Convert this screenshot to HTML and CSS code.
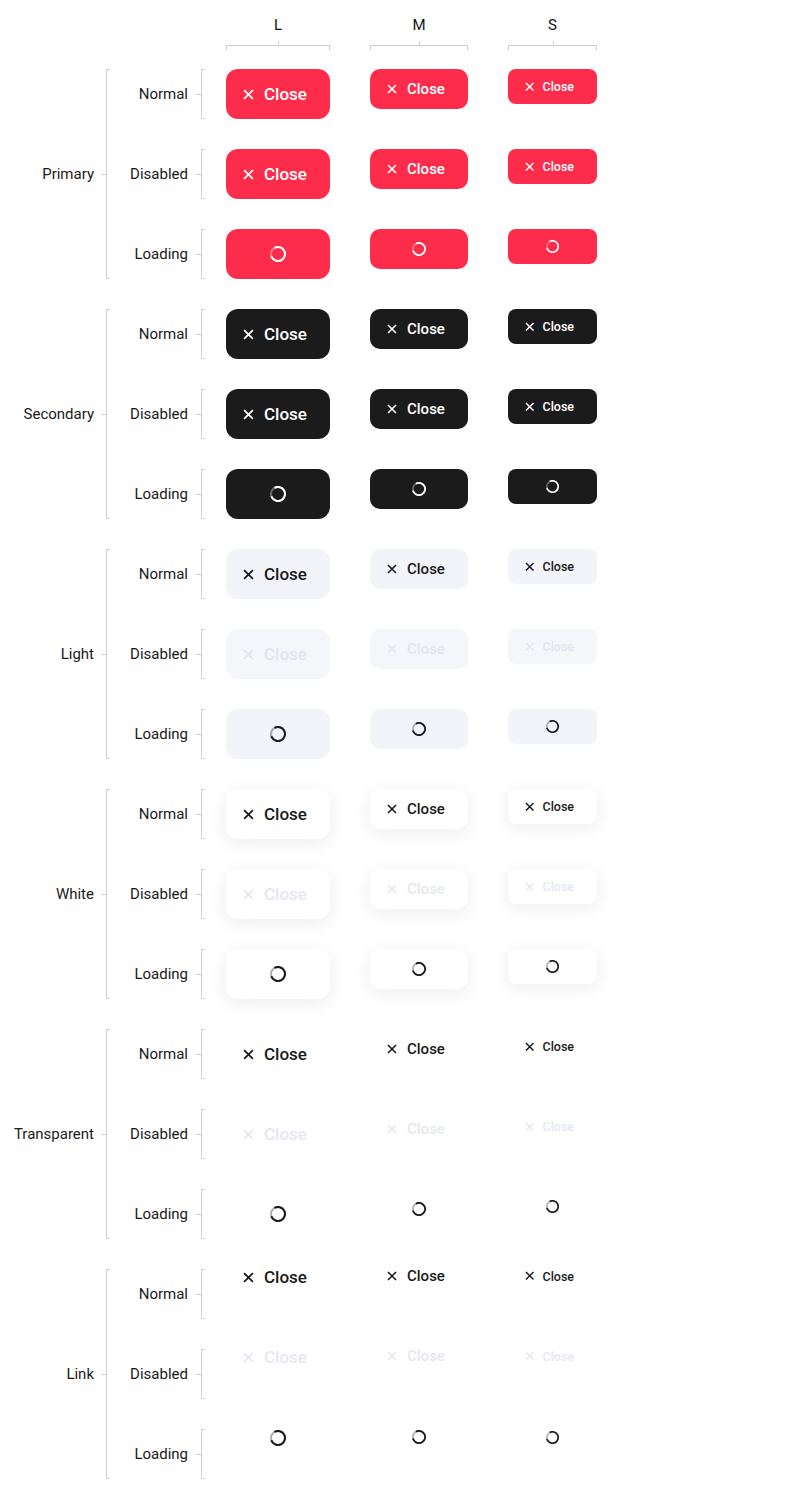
FILE: index.html
```html
<!DOCTYPE html>
<html lang="en">
<head>
<meta charset="utf-8">
<title>Close buttons</title>
<link rel="stylesheet" href="styles.css">
</head>
<body>
<div class="page">
  <div class="head">
    <div class="col-head"><span class="col-title">L</span><div class="hb"></div></div>
    <div class="col-head"><span class="col-title">M</span><div class="hb"></div></div>
    <div class="col-head"><span class="col-title">S</span><div class="hb"></div></div>
  </div>

  <!-- Primary -->
  <div class="group primary">
    <div class="g-label">Primary</div><div class="tick"></div><div class="bracket"></div>
    <div class="rows">
      <div class="row">
        <div class="r-label">Normal</div><div class="tick"></div><div class="bracket r"></div>
        <div class="cells">
          <button class="btn l"><svg class="x" viewBox="0 0 10 10"><path d="M1 1L9 9M9 1L1 9"/></svg><span>Close</span></button>
          <button class="btn m"><svg class="x" viewBox="0 0 10 10"><path d="M1 1L9 9M9 1L1 9"/></svg><span>Close</span></button>
          <button class="btn s"><svg class="x" viewBox="0 0 10 10"><path d="M1 1L9 9M9 1L1 9"/></svg><span>Close</span></button>
        </div>
      </div>
      <div class="row disabled">
        <div class="r-label">Disabled</div><div class="tick"></div><div class="bracket r"></div>
        <div class="cells">
          <button class="btn l"><svg class="x" viewBox="0 0 10 10"><path d="M1 1L9 9M9 1L1 9"/></svg><span>Close</span></button>
          <button class="btn m"><svg class="x" viewBox="0 0 10 10"><path d="M1 1L9 9M9 1L1 9"/></svg><span>Close</span></button>
          <button class="btn s"><svg class="x" viewBox="0 0 10 10"><path d="M1 1L9 9M9 1L1 9"/></svg><span>Close</span></button>
        </div>
      </div>
      <div class="row">
        <div class="r-label">Loading</div><div class="tick"></div><div class="bracket r"></div>
        <div class="cells">
          <button class="btn l loading"><svg class="spin" viewBox="0 0 16 16"><circle class="track" cx="8" cy="8" r="7"/><circle class="arc" cx="8" cy="8" r="7"/></svg></button>
          <button class="btn m loading"><svg class="spin" viewBox="0 0 16 16"><circle class="track" cx="8" cy="8" r="7"/><circle class="arc" cx="8" cy="8" r="7"/></svg></button>
          <button class="btn s loading"><svg class="spin" viewBox="0 0 16 16"><circle class="track" cx="8" cy="8" r="7"/><circle class="arc" cx="8" cy="8" r="7"/></svg></button>
        </div>
      </div>
    </div>
  </div>

  <!-- Secondary -->
  <div class="group secondary">
    <div class="g-label">Secondary</div><div class="tick"></div><div class="bracket"></div>
    <div class="rows">
      <div class="row">
        <div class="r-label">Normal</div><div class="tick"></div><div class="bracket r"></div>
        <div class="cells">
          <button class="btn l"><svg class="x" viewBox="0 0 10 10"><path d="M1 1L9 9M9 1L1 9"/></svg><span>Close</span></button>
          <button class="btn m"><svg class="x" viewBox="0 0 10 10"><path d="M1 1L9 9M9 1L1 9"/></svg><span>Close</span></button>
          <button class="btn s"><svg class="x" viewBox="0 0 10 10"><path d="M1 1L9 9M9 1L1 9"/></svg><span>Close</span></button>
        </div>
      </div>
      <div class="row disabled">
        <div class="r-label">Disabled</div><div class="tick"></div><div class="bracket r"></div>
        <div class="cells">
          <button class="btn l"><svg class="x" viewBox="0 0 10 10"><path d="M1 1L9 9M9 1L1 9"/></svg><span>Close</span></button>
          <button class="btn m"><svg class="x" viewBox="0 0 10 10"><path d="M1 1L9 9M9 1L1 9"/></svg><span>Close</span></button>
          <button class="btn s"><svg class="x" viewBox="0 0 10 10"><path d="M1 1L9 9M9 1L1 9"/></svg><span>Close</span></button>
        </div>
      </div>
      <div class="row">
        <div class="r-label">Loading</div><div class="tick"></div><div class="bracket r"></div>
        <div class="cells">
          <button class="btn l loading"><svg class="spin" viewBox="0 0 16 16"><circle class="track" cx="8" cy="8" r="7"/><circle class="arc" cx="8" cy="8" r="7"/></svg></button>
          <button class="btn m loading"><svg class="spin" viewBox="0 0 16 16"><circle class="track" cx="8" cy="8" r="7"/><circle class="arc" cx="8" cy="8" r="7"/></svg></button>
          <button class="btn s loading"><svg class="spin" viewBox="0 0 16 16"><circle class="track" cx="8" cy="8" r="7"/><circle class="arc" cx="8" cy="8" r="7"/></svg></button>
        </div>
      </div>
    </div>
  </div>

  <!-- Light -->
  <div class="group light">
    <div class="g-label">Light</div><div class="tick"></div><div class="bracket"></div>
    <div class="rows">
      <div class="row">
        <div class="r-label">Normal</div><div class="tick"></div><div class="bracket r"></div>
        <div class="cells">
          <button class="btn l"><svg class="x" viewBox="0 0 10 10"><path d="M1 1L9 9M9 1L1 9"/></svg><span>Close</span></button>
          <button class="btn m"><svg class="x" viewBox="0 0 10 10"><path d="M1 1L9 9M9 1L1 9"/></svg><span>Close</span></button>
          <button class="btn s"><svg class="x" viewBox="0 0 10 10"><path d="M1 1L9 9M9 1L1 9"/></svg><span>Close</span></button>
        </div>
      </div>
      <div class="row disabled">
        <div class="r-label">Disabled</div><div class="tick"></div><div class="bracket r"></div>
        <div class="cells">
          <button class="btn l"><svg class="x" viewBox="0 0 10 10"><path d="M1 1L9 9M9 1L1 9"/></svg><span>Close</span></button>
          <button class="btn m"><svg class="x" viewBox="0 0 10 10"><path d="M1 1L9 9M9 1L1 9"/></svg><span>Close</span></button>
          <button class="btn s"><svg class="x" viewBox="0 0 10 10"><path d="M1 1L9 9M9 1L1 9"/></svg><span>Close</span></button>
        </div>
      </div>
      <div class="row">
        <div class="r-label">Loading</div><div class="tick"></div><div class="bracket r"></div>
        <div class="cells">
          <button class="btn l loading"><svg class="spin" viewBox="0 0 16 16"><circle class="track" cx="8" cy="8" r="7"/><circle class="arc" cx="8" cy="8" r="7"/></svg></button>
          <button class="btn m loading"><svg class="spin" viewBox="0 0 16 16"><circle class="track" cx="8" cy="8" r="7"/><circle class="arc" cx="8" cy="8" r="7"/></svg></button>
          <button class="btn s loading"><svg class="spin" viewBox="0 0 16 16"><circle class="track" cx="8" cy="8" r="7"/><circle class="arc" cx="8" cy="8" r="7"/></svg></button>
        </div>
      </div>
    </div>
  </div>

  <!-- White -->
  <div class="group white">
    <div class="g-label">White</div><div class="tick"></div><div class="bracket"></div>
    <div class="rows">
      <div class="row">
        <div class="r-label">Normal</div><div class="tick"></div><div class="bracket r"></div>
        <div class="cells">
          <button class="btn l"><svg class="x" viewBox="0 0 10 10"><path d="M1 1L9 9M9 1L1 9"/></svg><span>Close</span></button>
          <button class="btn m"><svg class="x" viewBox="0 0 10 10"><path d="M1 1L9 9M9 1L1 9"/></svg><span>Close</span></button>
          <button class="btn s"><svg class="x" viewBox="0 0 10 10"><path d="M1 1L9 9M9 1L1 9"/></svg><span>Close</span></button>
        </div>
      </div>
      <div class="row disabled">
        <div class="r-label">Disabled</div><div class="tick"></div><div class="bracket r"></div>
        <div class="cells">
          <button class="btn l"><svg class="x" viewBox="0 0 10 10"><path d="M1 1L9 9M9 1L1 9"/></svg><span>Close</span></button>
          <button class="btn m"><svg class="x" viewBox="0 0 10 10"><path d="M1 1L9 9M9 1L1 9"/></svg><span>Close</span></button>
          <button class="btn s"><svg class="x" viewBox="0 0 10 10"><path d="M1 1L9 9M9 1L1 9"/></svg><span>Close</span></button>
        </div>
      </div>
      <div class="row">
        <div class="r-label">Loading</div><div class="tick"></div><div class="bracket r"></div>
        <div class="cells">
          <button class="btn l loading"><svg class="spin" viewBox="0 0 16 16"><circle class="track" cx="8" cy="8" r="7"/><circle class="arc" cx="8" cy="8" r="7"/></svg></button>
          <button class="btn m loading"><svg class="spin" viewBox="0 0 16 16"><circle class="track" cx="8" cy="8" r="7"/><circle class="arc" cx="8" cy="8" r="7"/></svg></button>
          <button class="btn s loading"><svg class="spin" viewBox="0 0 16 16"><circle class="track" cx="8" cy="8" r="7"/><circle class="arc" cx="8" cy="8" r="7"/></svg></button>
        </div>
      </div>
    </div>
  </div>

  <!-- Transparent -->
  <div class="group transparent">
    <div class="g-label">Transparent</div><div class="tick"></div><div class="bracket"></div>
    <div class="rows">
      <div class="row">
        <div class="r-label">Normal</div><div class="tick"></div><div class="bracket r"></div>
        <div class="cells">
          <button class="btn l"><svg class="x" viewBox="0 0 10 10"><path d="M1 1L9 9M9 1L1 9"/></svg><span>Close</span></button>
          <button class="btn m"><svg class="x" viewBox="0 0 10 10"><path d="M1 1L9 9M9 1L1 9"/></svg><span>Close</span></button>
          <button class="btn s"><svg class="x" viewBox="0 0 10 10"><path d="M1 1L9 9M9 1L1 9"/></svg><span>Close</span></button>
        </div>
      </div>
      <div class="row disabled">
        <div class="r-label">Disabled</div><div class="tick"></div><div class="bracket r"></div>
        <div class="cells">
          <button class="btn l"><svg class="x" viewBox="0 0 10 10"><path d="M1 1L9 9M9 1L1 9"/></svg><span>Close</span></button>
          <button class="btn m"><svg class="x" viewBox="0 0 10 10"><path d="M1 1L9 9M9 1L1 9"/></svg><span>Close</span></button>
          <button class="btn s"><svg class="x" viewBox="0 0 10 10"><path d="M1 1L9 9M9 1L1 9"/></svg><span>Close</span></button>
        </div>
      </div>
      <div class="row">
        <div class="r-label">Loading</div><div class="tick"></div><div class="bracket r"></div>
        <div class="cells">
          <button class="btn l loading"><svg class="spin" viewBox="0 0 16 16"><circle class="track" cx="8" cy="8" r="7"/><circle class="arc" cx="8" cy="8" r="7"/></svg></button>
          <button class="btn m loading"><svg class="spin" viewBox="0 0 16 16"><circle class="track" cx="8" cy="8" r="7"/><circle class="arc" cx="8" cy="8" r="7"/></svg></button>
          <button class="btn s loading"><svg class="spin" viewBox="0 0 16 16"><circle class="track" cx="8" cy="8" r="7"/><circle class="arc" cx="8" cy="8" r="7"/></svg></button>
        </div>
      </div>
    </div>
  </div>

  <!-- Link -->
  <div class="group link">
    <div class="g-label">Link</div><div class="tick"></div><div class="bracket"></div>
    <div class="rows">
      <div class="row">
        <div class="r-label">Normal</div><div class="tick"></div><div class="bracket r"></div>
        <div class="cells">
          <button class="btn l"><svg class="x" viewBox="0 0 10 10"><path d="M1 1L9 9M9 1L1 9"/></svg><span>Close</span></button>
          <button class="btn m"><svg class="x" viewBox="0 0 10 10"><path d="M1 1L9 9M9 1L1 9"/></svg><span>Close</span></button>
          <button class="btn s"><svg class="x" viewBox="0 0 10 10"><path d="M1 1L9 9M9 1L1 9"/></svg><span>Close</span></button>
        </div>
      </div>
      <div class="row disabled">
        <div class="r-label">Disabled</div><div class="tick"></div><div class="bracket r"></div>
        <div class="cells">
          <button class="btn l"><svg class="x" viewBox="0 0 10 10"><path d="M1 1L9 9M9 1L1 9"/></svg><span>Close</span></button>
          <button class="btn m"><svg class="x" viewBox="0 0 10 10"><path d="M1 1L9 9M9 1L1 9"/></svg><span>Close</span></button>
          <button class="btn s"><svg class="x" viewBox="0 0 10 10"><path d="M1 1L9 9M9 1L1 9"/></svg><span>Close</span></button>
        </div>
      </div>
      <div class="row">
        <div class="r-label">Loading</div><div class="tick"></div><div class="bracket r"></div>
        <div class="cells">
          <button class="btn l loading"><svg class="spin" viewBox="0 0 16 16"><circle class="track" cx="8" cy="8" r="7"/><circle class="arc" cx="8" cy="8" r="7"/></svg></button>
          <button class="btn m loading"><svg class="spin" viewBox="0 0 16 16"><circle class="track" cx="8" cy="8" r="7"/><circle class="arc" cx="8" cy="8" r="7"/></svg></button>
          <button class="btn s loading"><svg class="spin" viewBox="0 0 16 16"><circle class="track" cx="8" cy="8" r="7"/><circle class="arc" cx="8" cy="8" r="7"/></svg></button>
        </div>
      </div>
    </div>
  </div>
</div>
</body>
</html>
```

FILE: styles.css
```css
html, body {
  margin: 0;
  padding: 0;
  background: #ffffff;
}

body {
  font-family: Roboto, "Noto Sans", "Liberation Sans", sans-serif;
  color: #1a1a1a;
}

.page {
  width: 800px;
  padding-bottom: 30px;
}

/* ---------- column header ---------- */
.head {
  display: grid;
  grid-template-columns: 104px 98px 89px;
  column-gap: 40px;
  padding: 16px 0 0 226px;
  height: 69px;
  box-sizing: border-box;
}

.col-head {
  display: flex;
  flex-direction: column;
  align-items: center;
}

.col-title {
  font-size: 15px;
  line-height: 18px;
  color: #111418;
}

.hb {
  position: relative;
  align-self: stretch;
  height: 4px;
  margin-top: 11px;
  border: 1px solid #cfcfcf;
  border-bottom: 0;
}

.hb::before {
  content: "";
  position: absolute;
  left: 50%;
  top: -5px;
  width: 1px;
  height: 4px;
  background: #cfcfcf;
}

/* ---------- groups & rows ---------- */
.group {
  display: flex;
  align-items: center;
  margin-bottom: 30px;
}

.group:last-child {
  margin-bottom: 0;
}

.g-label {
  width: 94px;
  text-align: right;
  font-size: 15px;
  line-height: 18px;
  color: #1a1a1a;
}

.r-label {
  width: 78px;
  text-align: right;
  font-size: 15px;
  line-height: 18px;
  color: #1a1a1a;
}

.tick {
  width: 5px;
  height: 1px;
  margin-left: 7px;
  background: #cfcfcf;
}

.row .tick {
  margin-left: 8px;
}

.bracket {
  align-self: stretch;
  width: 3px;
  border: 1px solid #cfcfcf;
  border-right: 0;
}

.bracket.r {
  height: 48px;
  align-self: auto;
}

.rows {
  display: flex;
  flex-direction: column;
  gap: 30px;
}

.row {
  display: flex;
  align-items: center;
  height: 50px;
}

.cells {
  align-self: flex-start;
  margin-left: 21px;
  display: grid;
  grid-template-columns: 104px 98px 89px;
  column-gap: 40px;
  align-items: start;
}

/* ---------- button ---------- */
.btn {
  display: flex;
  align-items: center;
  box-sizing: border-box;
  margin: 0;
  border: 0;
  background: transparent;
  font-family: Roboto, "Noto Sans", "Liberation Sans", sans-serif;
  font-weight: 500;
  color: #1a1a1a;
  white-space: nowrap;
  cursor: pointer;
}

.btn .x {
  flex: none;
  display: block;
}

.btn .x path {
  fill: none;
  stroke: currentColor;
  stroke-width: 1.6;
}

.btn.l {
  width: 104px;
  height: 50px;
  padding: 0 0 0 17px;
  gap: 10px;
  border-radius: 12px;
  font-size: 17px;
}

.btn.l .x {
  width: 11px;
  height: 11px;
}

.btn.m {
  width: 98px;
  height: 40px;
  padding: 0 0 0 17px;
  gap: 10px;
  border-radius: 10px;
  font-size: 15px;
}

.btn.m .x {
  width: 10px;
  height: 10px;
}

.btn.s {
  width: 89px;
  height: 35px;
  padding: 0 0 0 16.5px;
  gap: 8.5px;
  border-radius: 8px;
  font-size: 12.5px;
}

.btn.s .x {
  width: 9.5px;
  height: 9.5px;
}

.btn.loading {
  justify-content: center;
  padding: 0;
}

/* spinner */
.spin {
  display: block;
  flex: none;
}

.spin circle {
  fill: none;
  stroke: currentColor;
  stroke-width: 2;
}

.spin .track {
  opacity: 0.35;
}

.spin .arc {
  stroke-dasharray: 34.2 43.98;
  transform: rotate(240deg);
  transform-origin: 8px 8px;
}

.btn.l .spin { width: 16px; height: 16px; }
.btn.m .spin { width: 14px; height: 14px; }
.btn.s .spin { width: 13px; height: 13px; }

/* ---------- variants ---------- */
.primary .btn {
  background: #fe2c4b;
  color: #ffffff;
}

.secondary .btn {
  background: #1b1b1b;
  color: #ffffff;
}

.light .btn {
  background: #f3f4f9;
  color: #1a1a1a;
}

.light .disabled .btn {
  background: #f5f6fa;
  color: #e3e5ee;
}

.white .btn {
  background: #ffffff;
  color: #1a1a1a;
  box-shadow: 0 4px 18px rgba(20, 20, 40, 0.08);
}

.white .disabled .btn {
  color: #e6e8f0;
}

.transparent .disabled .btn,
.link .disabled .btn {
  color: #e6e8f0;
}

/* link: no box height */
.link .btn.l { height: 16px; border-radius: 0; }
.link .btn.m { height: 14px; border-radius: 0; }
.link .btn.s { height: 14px; border-radius: 0; }
.link .btn.l.loading { height: 18px; }
.link .btn.m.loading { height: 16px; }
.link .btn.s.loading { height: 16px; }
```
